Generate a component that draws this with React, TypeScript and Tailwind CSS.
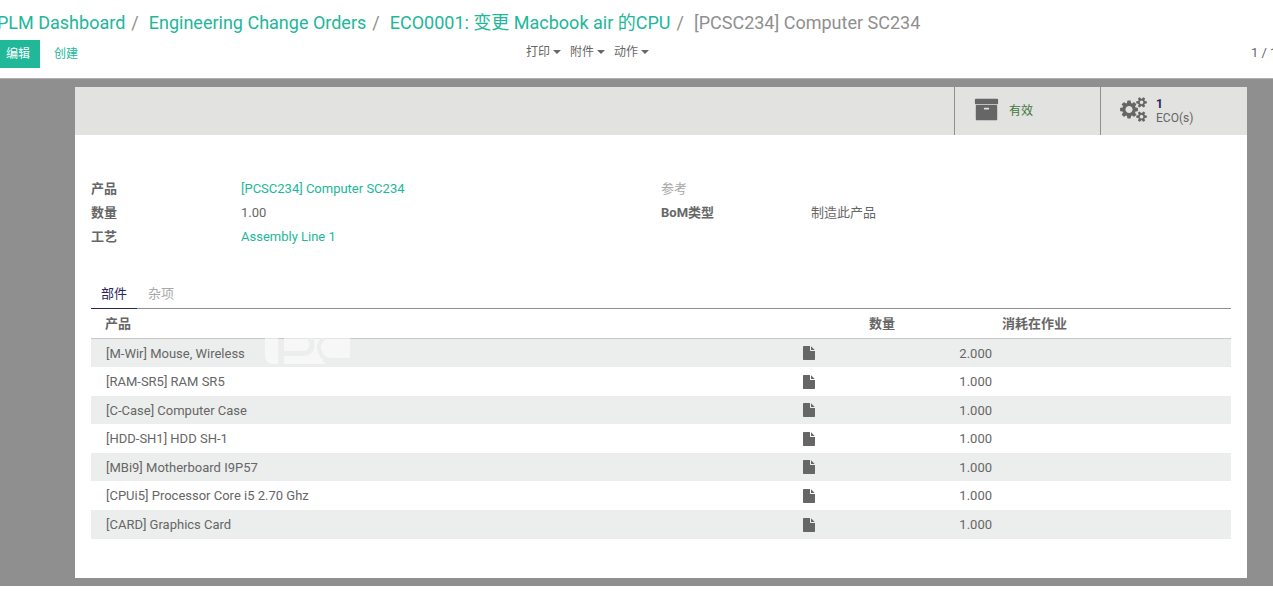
import React from "react";

const parts = [
  { name: "[M-Wir] Mouse, Wireless", qty: "2.000" },
  { name: "[RAM-SR5] RAM SR5", qty: "1.000" },
  { name: "[C-Case] Computer Case", qty: "1.000" },
  { name: "[HDD-SH1] HDD SH-1", qty: "1.000" },
  { name: "[MBi9] Motherboard I9P57", qty: "1.000" },
  { name: "[CPUi5] Processor Core i5 2.70 Ghz", qty: "1.000" },
  { name: "[CARD] Graphics Card", qty: "1.000" },
];

const crumbs = [
  "PLM Dashboard",
  "Engineering Change Orders",
  "ECO0001: 变更 Macbook air 的CPU",
];

function ArchiveIcon() {
  return (
    <svg viewBox="0 0 1792 1792" className="mb-1 size-[25px] fill-current" aria-hidden="true">
      <path d="M1088 832q0-26-19-45t-45-19h-256q-26 0-45 19t-19 45 19 45 45 19h256q26 0 45-19t19-45zm576-192v960q0 26-19 45t-45 19h-1408q-26 0-45-19t-19-45v-960q0-26 19-45t45-19h1408q26 0 45 19t19 45zm64-448v256q0 26-19 45t-45 19h-1536q-26 0-45-19t-19-45v-256q0-26 19-45t45-19h1536q26 0 45 19t19 45z" />
    </svg>
  );
}

function CogsIcon() {
  return (
    <svg viewBox="0 0 1920 1792" className="mb-1 h-[25px] w-[27px] fill-current" aria-hidden="true">
      <path d="M896 896q0-106-75-181t-181-75-181 75-75 181 75 181 181 75 181-75 75-181zm768 512q0-52-38-90t-90-38-90 38-38 90q0 53 37.5 90.5t90.5 37.5 90.5-37.5 37.5-90.5zm0-1024q0-52-38-90t-90-38-90 38-38 90q0 53 37.5 90.5t90.5 37.5 90.5-37.5 37.5-90.5zm-384 421v185q0 10-7 19.5t-16 10.5l-155 24q-11 35-32 76 34 48 90 115 7 11 7 20 0 12-7 19-23 30-82.5 89.5t-78.5 59.5q-11 0-21-7l-115-90q-37 19-77 31-11 108-23 155-7 24-30 24h-186q-11 0-20-7.5t-10-17.5l-23-153q-34-10-75-31l-118 89q-7 7-20 7-11 0-21-8-144-133-144-160 0-9 7-19 10-14 41-53t47-61q-23-44-35-82l-152-24q-10-1-17-9.5t-7-19.5v-185q0-10 7-19.5t16-10.5l155-24q11-35 32-76-34-48-90-115-7-11-7-20 0-12 7-20 22-30 82-89t79-59q11 0 21 7l115 90q34-18 77-32 11-108 23-154 7-24 30-24h186q11 0 20 7.5t10 17.5l23 153q34 10 75 31l118-89q8-7 20-7 11 0 21 8 144 133 144 160 0 8-7 19-12 16-42 54t-45 60q23 48 34 82l152 23q10 2 17 10.5t7 19.5zm640 533v140q0 16-149 31-12 27-30 52 51 113 51 138 0 4-4 7-122 71-124 71-8 0-46-47t-52-68q-20 2-30 2t-30-2q-14 21-52 68t-46 47q-2 0-124-71-4-3-4-7 0-25 51-138-18-25-30-52-149-15-149-31v-140q0-16 149-31 13-29 30-52-51-113-51-138 0-4 4-7 4-2 35-20t59-34 30-16q8 0 46 46.5t52 67.5q20-2 30-2t30 2q51-71 92-112l6-2q4 0 124 70 4 3 4 7 0 25-51 138 17 23 30 52 149 15 149 31zm0-1024v140q0 16-149 31-12 27-30 52 51 113 51 138 0 4-4 7-122 71-124 71-8 0-46-47t-52-68q-20 2-30 2t-30-2q-14 21-52 68t-46 47q-2 0-124-71-4-3-4-7 0-25 51-138-18-25-30-52-149-15-149-31v-140q0-16 149-31 13-29 30-52-51-113-51-138 0-4 4-7 4-2 35-20t59-34 30-16q8 0 46 46.5t52 67.5q20-2 30-2t30 2q51-71 92-112l6-2q4 0 124 70 4 3 4 7 0 25-51 138 17 23 30 52 149 15 149 31z" />
    </svg>
  );
}

function FileIcon() {
  return (
    <svg viewBox="0 0 1792 1792" className="block size-[14px] fill-current" aria-hidden="true">
      <path d="M1152 512v-472q22 14 36 28l408 408q14 14 28 36h-472zm-128 32q0 40 28 68t68 28h544v1056q0 40-28 68t-68 28h-1344q-40 0-68-28t-28-68v-1600q0-40 28-68t68-28h800v544z" />
    </svg>
  );
}

function Watermark() {
  return (
    <svg
      viewBox="0 0 85 26"
      className="pointer-events-none absolute top-[29px] left-[174px] h-[26px] w-[85px]"
      aria-hidden="true"
    >
      <path className="fill-white/50" d="M0 0H13V26H9Q0 26 0 17Z" />
      <path className="fill-white/50" d="M19 0H85V22H57L61 26H19Z" />
      <path className="fill-none stroke-[#eceeed]" strokeWidth="5" d="M19 15.500H38Q47 15 47 6Q47 3 45 0" />
      <path className="fill-none stroke-[#eceeed]" strokeWidth="4" d="M59 0Q53 5 54 11Q56 22 68 22H85" />
    </svg>
  );
}

function Menu({ label }: { label: string }) {
  return (
    <button type="button" className="flex items-center gap-[3px]">
      {label}
      <svg viewBox="0 0 8 4" className="h-1 w-2 fill-current" aria-hidden="true">
        <path d="M0 0h8L4 4z" />
      </svg>
    </button>
  );
}

function Field({ label, muted, children }: { label: string; muted?: boolean; children?: React.ReactNode }) {
  return (
    <div className="flex h-6">
      <dt className={muted ? "w-[150px] text-[#a8a8a8]" : "w-[150px] font-bold"}>{label}</dt>
      <dd>{children}</dd>
    </div>
  );
}

export default function App() {
  return (
    <div className="overflow-hidden bg-white font-['Roboto','Noto_Sans_CJK_SC',sans-serif] text-[13px] leading-5 text-[#666666]">
      <header className="border-b border-[#afafaf]">
        <nav aria-label="Breadcrumb" className="-ml-[3px] flex h-10 items-center pt-1.5 text-[18px] whitespace-nowrap text-[#8f8f8f]">
          {crumbs.map((crumb) => (
            <React.Fragment key={crumb}>
              <a href="#" className="text-[#21b799]">{crumb}</a>
              <span className="pr-2.5 pl-1.5">/</span>
            </React.Fragment>
          ))}
          <span>[PCSC234] Computer SC234</span>
        </nav>
        <div className="grid h-[38px] grid-cols-[526px_1fr_22px] items-start text-[12px]">
          <div className="flex gap-2">
            <button type="button" className="h-7 bg-[#21b799] pr-2.5 pl-1.5 text-white">编辑</button>
            <button type="button" className="h-7 px-1.5 text-[#21b799]">创建</button>
          </div>
          <div className="flex gap-[9px] pt-0.5">
            <Menu label="打印" />
            <Menu label="附件" />
            <Menu label="动作" />
          </div>
          <div className="overflow-hidden pt-[3px] text-[13px] whitespace-nowrap">1 / 1</div>
        </div>
      </header>

      <main className="bg-[#8f8f8f] pt-2 pr-[26px] pb-2 pl-[75px]">
        <div className="bg-white">
          <div className="flex h-12 justify-end bg-[#e2e2e0] text-[12px]">
            <button type="button" className="flex w-[146px] items-center gap-2.5 border-l border-[#8f8f8f] pl-[19px]">
              <ArchiveIcon />
              <span className="text-[#3c763d]">有效</span>
            </button>
            <button type="button" className="flex w-[147px] items-center gap-[9px] border-l border-[#8f8f8f] pl-[19px] text-left">
              <CogsIcon />
              <span className="block leading-[14px]">
                <span className="block font-bold text-[#2a2559]">1</span>
                <span className="block">ECO(s)</span>
              </span>
            </button>
          </div>

          <div className="px-4 pt-11 pb-[39px]">
            <dl className="grid grid-cols-2">
              <div>
                <Field label="产品"><a href="#" className="text-[#21b799]">[PCSC234] Computer SC234</a></Field>
                <Field label="数量">1.00</Field>
                <Field label="工艺"><a href="#" className="text-[#21b799]">Assembly Line 1</a></Field>
              </div>
              <div>
                <Field label="参考" muted />
                <Field label="BoM类型">制造此产品</Field>
              </div>
            </dl>

            <div role="tablist" className="mt-[30px] flex h-7 border-b border-[#8f8f8f]">
              <button type="button" role="tab" aria-selected="true" className="-mb-px border-b border-[#2a2559] px-2.5 pb-0.5 text-[#2a2559]">部件</button>
              <button type="button" role="tab" aria-selected="false" className="px-[11px] pb-0.5 text-[#a8a8a8]">杂项</button>
            </div>

            <div className="relative">
              <table className="w-full table-fixed border-separate border-spacing-0">
                <colgroup>
                  <col />
                  <col className="w-[66px]" />
                  <col className="w-[134px]" />
                  <col className="w-[235px]" />
                </colgroup>
                <thead>
                  <tr className="h-[30px] text-left">
                    <th className="border-b border-[#c8c8c8] pl-3.5">产品</th>
                    <th className="border-b border-[#c8c8c8]" />
                    <th className="border-b border-[#c8c8c8] pl-[7px]">数量</th>
                    <th className="border-b border-[#c8c8c8] pl-1.5">消耗在作业</th>
                  </tr>
                </thead>
                <tbody>
                  {parts.map((part) => (
                    <tr key={part.name} className="h-7 odd:bg-[#eceeed] even:h-[29px] last:h-[29px]">
                      <td className="pt-px pl-[15px]">{part.name}</td>
                      <td className="pl-1.5"><FileIcon /></td>
                      <td className="pt-px pr-1 text-right">{part.qty}</td>
                      <td />
                    </tr>
                  ))}
                </tbody>
              </table>
              <Watermark />
            </div>
          </div>
        </div>
      </main>
    </div>
  );
}
